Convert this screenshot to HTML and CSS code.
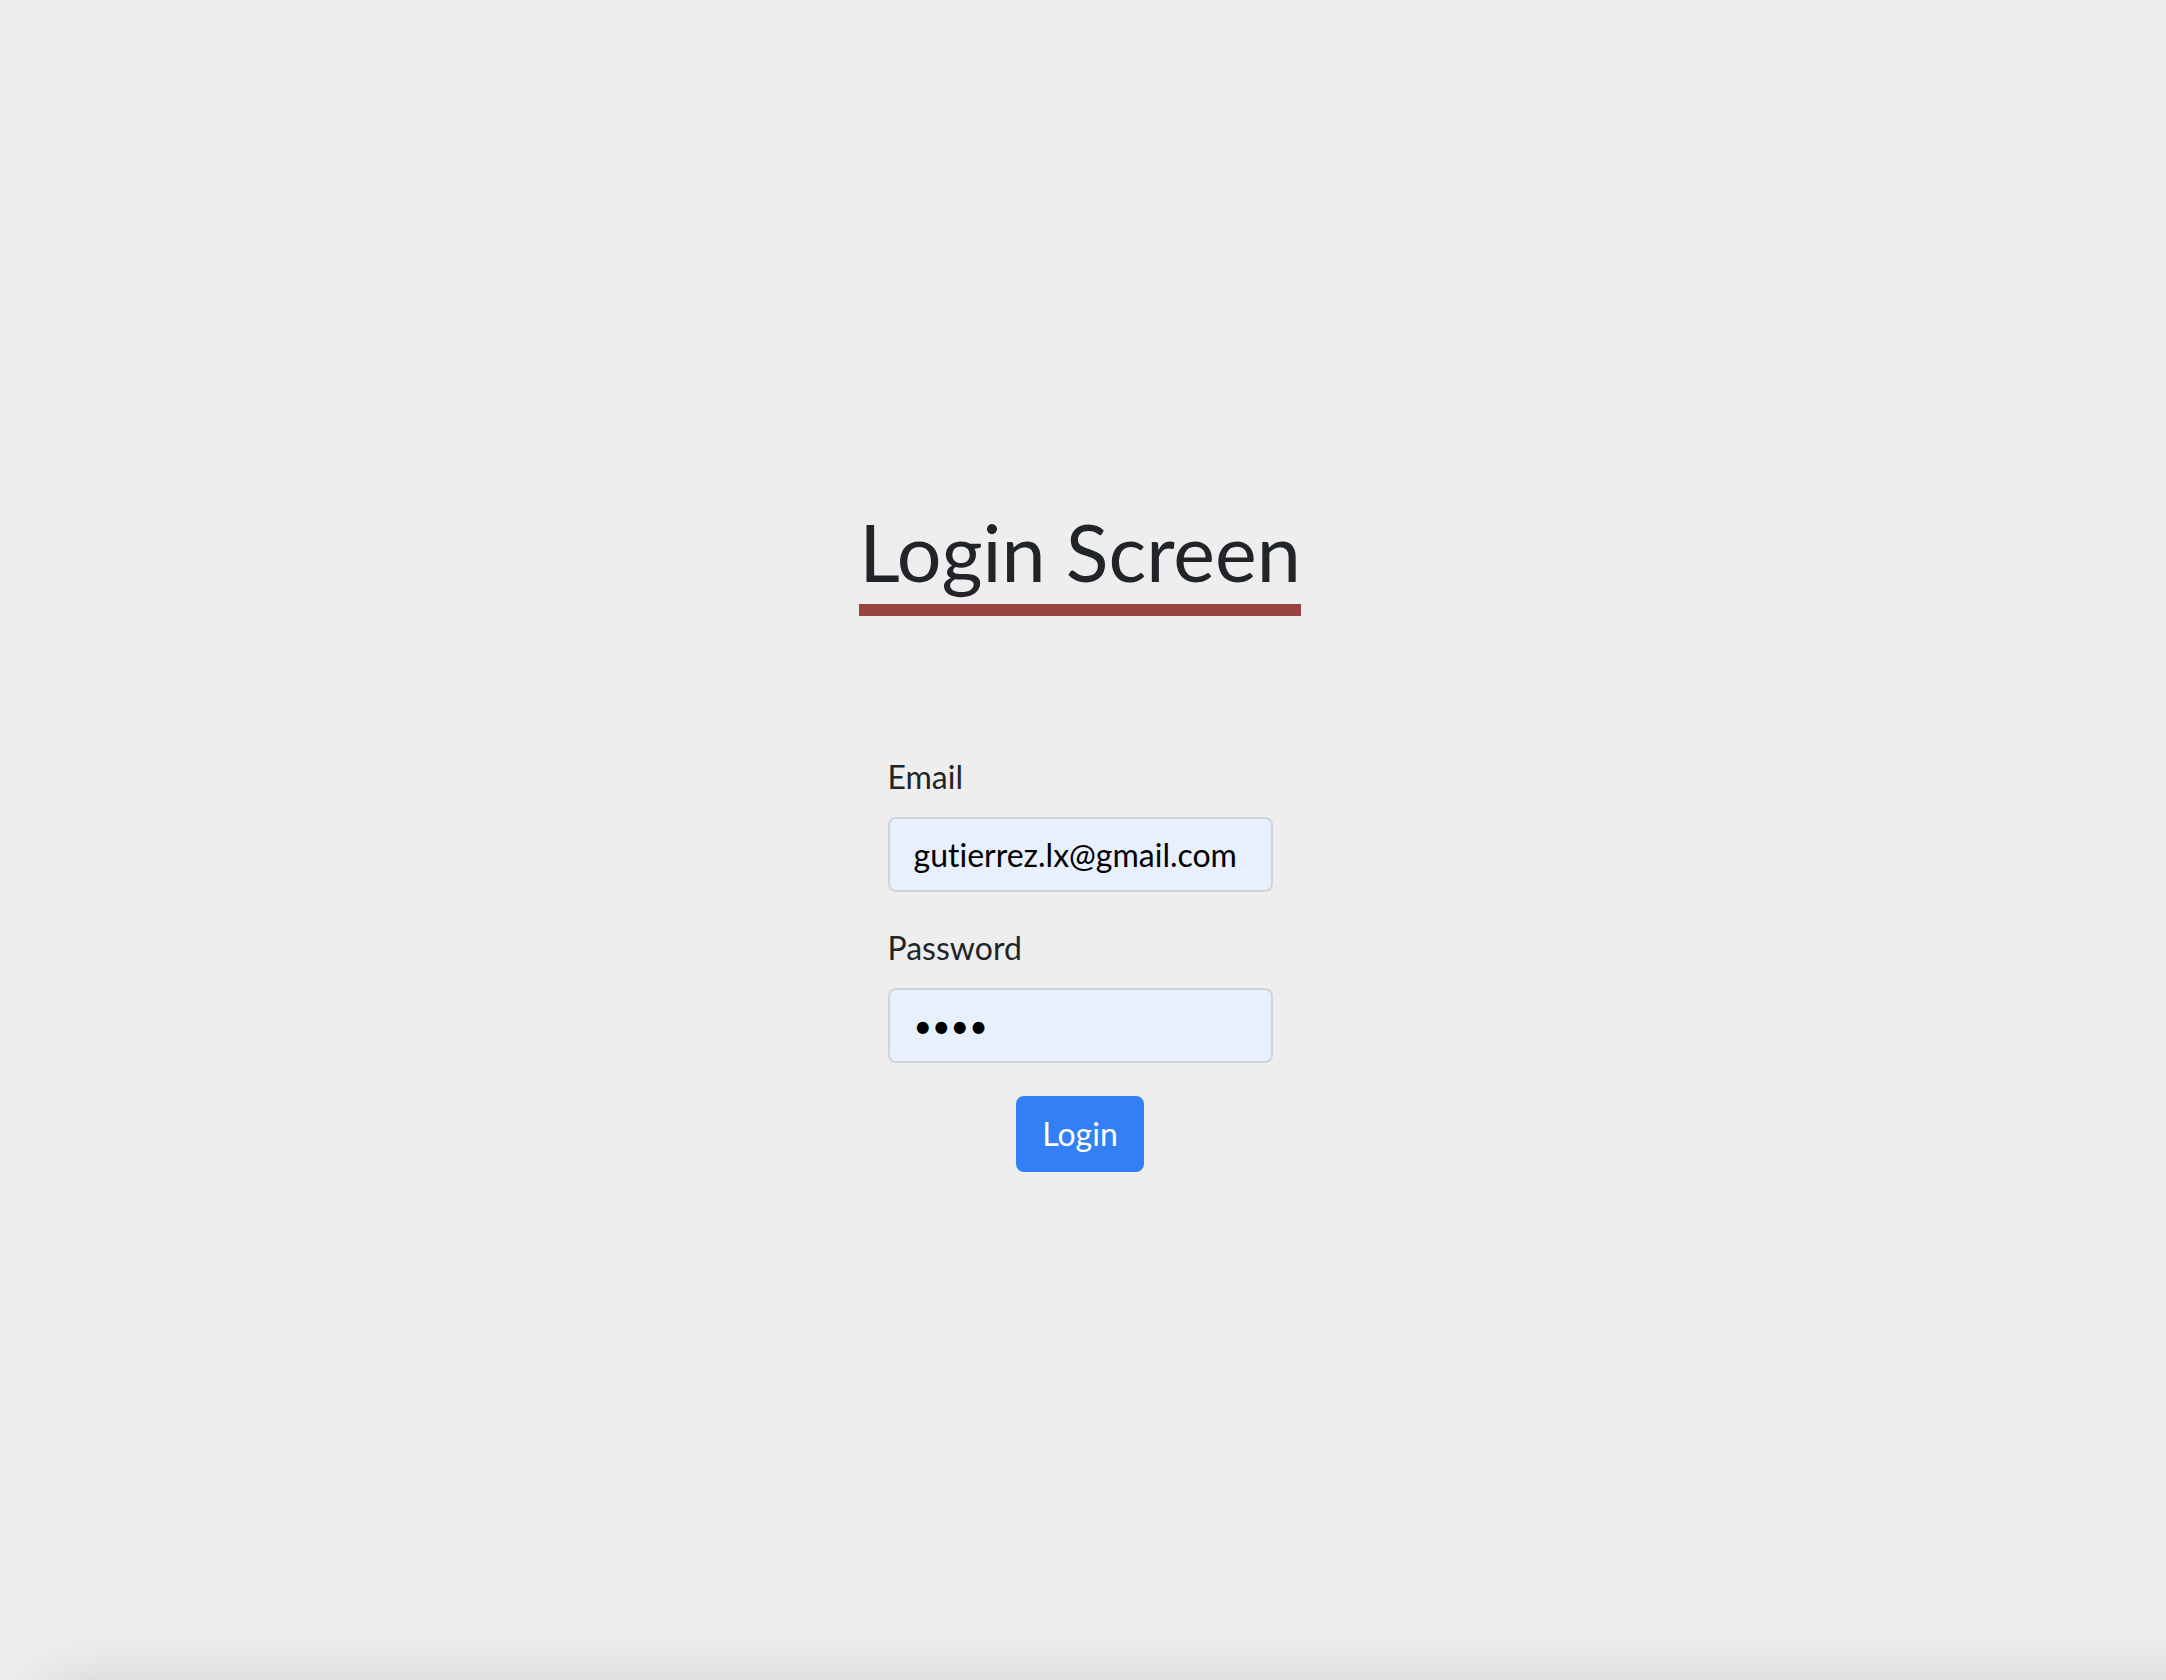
FILE: index.html
```html
<!DOCTYPE html>
<html lang="en">
<head>
<meta charset="utf-8">
<title>Login Screen</title>
<link rel="stylesheet" href="styles.css">
</head>
<body>
<main class="page">
  <h1 class="title">Login Screen</h1>
  <form class="login-form">
    <div class="form-group">
      <label class="form-label" for="email">Email</label>
      <input class="form-control" id="email" type="email" value="gutierrez.lx@gmail.com">
    </div>
    <div class="form-group">
      <label class="form-label" for="password">Password</label>
      <input class="form-control" id="password" type="password" value="abcd">
    </div>
    <div class="actions">
      <button class="btn-primary" type="button">Login</button>
    </div>
  </form>
</main>
<div class="bottom-shade"></div>
</body>
</html>
```

FILE: styles.css
```css
html, body {
  margin: 0;
  padding: 0;
  height: 100%;
}

body {
  background: #eeeeee;
  color: #212529;
  font-family: Lato, "Open Sans", "Noto Sans", sans-serif;
  font-size: 32px;
  line-height: 1.5;
  font-variant-ligatures: none;
  overflow: hidden;
}

.page {
  width: 2160px;
  display: flex;
  flex-direction: column;
  align-items: center;
  padding-top: 504px;
}

.title {
  display: inline-block;
  margin: 0;
  font-size: 79px;
  font-weight: 400;
  line-height: 96px;
  border-bottom: 12px solid #994440;
  padding: 0 0 4px;
}

.login-form {
  width: 385px;
  margin-top: 137px;
}

.form-group {
  margin-bottom: 32px;
}

.form-group:last-of-type {
  margin-bottom: 0;
}

.form-label {
  display: block;
  margin-bottom: 16px;
  line-height: 48px;
}

.form-control {
  display: block;
  box-sizing: border-box;
  width: 100%;
  height: 75px;
  padding: 12px 24px;
  font-family: inherit;
  font-size: 32px;
  line-height: 48px;
  color: #000;
  background: #e8f0fe;
  border: 2px solid #ced4da;
  border-radius: 8px;
  outline: none;
  font-variant-ligatures: none;
}

.actions {
  display: flex;
  justify-content: center;
  margin-top: 33px;
}

.btn-primary {
  height: 76px;
  padding: 12px 24px;
  font-family: inherit;
  font-size: 32px;
  line-height: 48px;
  color: #fff;
  background: #3380f6;
  border: 2px solid #3380f6;
  border-radius: 8px;
}

.bottom-shade {
  position: fixed;
  left: 40px;
  right: -60px;
  top: 1680px;
  height: 100px;
  box-shadow: 0 0 60px rgba(0, 0, 0, 0.12);
  border-radius: 30px;
}
```
